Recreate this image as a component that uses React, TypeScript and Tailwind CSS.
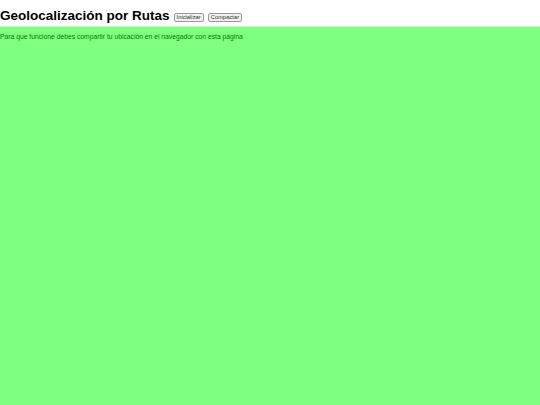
export default function App() {
  return (
    <div className="h-[405px] w-[540px] flex flex-col bg-white font-['Liberation_Sans',Arial,sans-serif]">
      {/* Header */}
      <div className="flex items-end h-[27px] border-b border-[#e5e5e5]">
        <h1 className="text-[13.5px] font-bold text-black leading-none pb-[4px]">
          Geolocalización por Rutas
        </h1>
        <div className="flex gap-[4px] ml-[4px] pb-[4px]">
          <button className="h-[9px] px-[2px] text-[5.8px] leading-none text-[#333] bg-[#f0f0f0] border border-[#999] rounded-[2px]">
            Inicializar
          </button>
          <button className="h-[9px] px-[2px] text-[5.8px] leading-none text-[#333] bg-[#f0f0f0] border border-[#999] rounded-[2px]">
            Compactar
          </button>
        </div>
      </div>

      {/* Map area */}
      <div className="flex-1 bg-[#80ff80] pt-[7px]">
        <p className="text-[6.75px] leading-none text-[#008000]">
          Para que funcione debes compartir tu ubicación en el navegador con esta página
        </p>
      </div>
    </div>
  )
}
